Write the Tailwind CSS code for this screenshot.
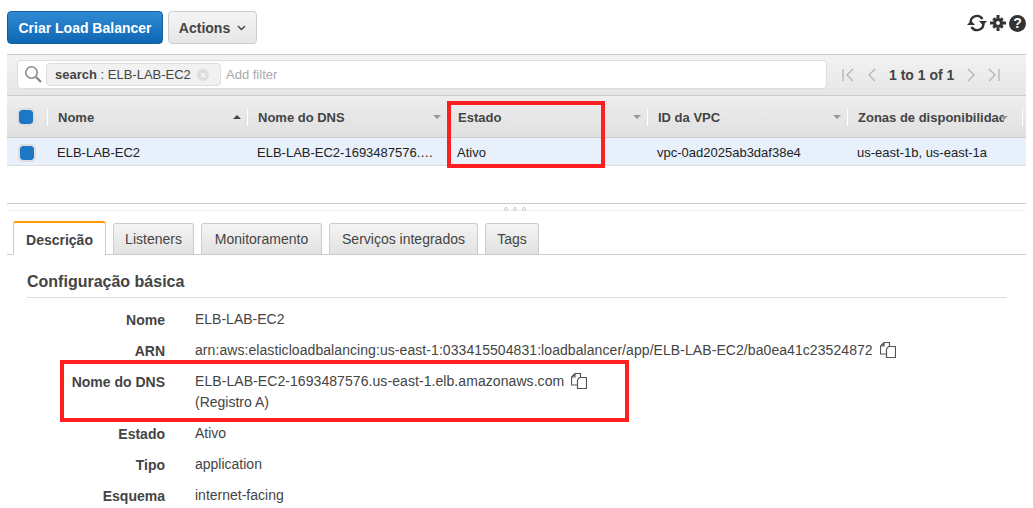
<!DOCTYPE html>
<html lang="en">
<head>
  <meta charset="UTF-8" />
  <title>Load Balancers</title>
  <script src="https://cdn.jsdelivr.net/npm/@tailwindcss/browser@4"></script>
</head>
<body class="bg-white h-[508px] w-[1033px] overflow-hidden relative font-['Liberation_Sans',Arial,sans-serif] text-[13px] text-[#333]">

  <!-- toolbar -->
  <div class="h-[54px] pl-[7px] pr-[7px] pt-[11px] flex items-start gap-[5px]">
    <button class="h-[33px] w-[156px] pt-[1px] rounded-[4px] border border-[#15609f] bg-gradient-to-b from-[#2f8ad4] to-[#0e67b3] text-white font-bold text-[14px]">Criar Load Balancer</button>
    <button class="h-[33px] w-[89px] pt-[1px] rounded-[4px] border border-[#ccc] bg-gradient-to-b from-[#f4f4f4] to-[#e6e6e6] text-[#444] font-bold text-[14px] flex items-center justify-center gap-[7px]">
      Actions
      <svg width="9" height="6" viewBox="0 0 9 6" fill="none" stroke="#444" stroke-width="1.4"><path d="M1 1l3.500 3.500L8 1" /></svg>
    </button>
    <div class="ml-auto mt-[2px] flex items-center">
      <svg width="20" height="20" viewBox="0 0 20 20" fill="none" stroke="#333" stroke-width="2.400">
        <path d="M3.500 9a6.500 6.500 0 0 1 12-3" />
        <path d="M16.500 11a6.500 6.500 0 0 1-12 3" />
        <path d="M12 8h8l-4 4.500z" fill="#333" stroke="none" />
        <path d="M0 12h8L4 7.500z" fill="#333" stroke="none" />
      </svg>
      <svg class="ml-[3px]" width="16" height="16" viewBox="0 0 16 16" fill="#333">
        <circle cx="8" cy="8" r="3.500" fill="none" stroke="#333" stroke-width="3.200" />
        <path d="M6.500 0h3v3h-3zM6.500 13h3v3h-3zM0 6.500h3v3H0zM13 6.500h3v3h-3z" />
        <path d="M2.300 4.400l2.100-2.100 2 2-2.100 2.100zM9.600 11.700l2.100-2.100 2 2-2.100 2.100zM11.700 2.300l2 2.100-2 2-2.100-2.100zM4.300 9.600l2.100 2.100-2.100 2-2-2.100z" />
      </svg>
      <span class="ml-[3px] w-[17px] h-[17px] rounded-full bg-[#333] text-white text-[14px] font-bold leading-[17px] text-center">?</span>
    </div>
  </div>

  <!-- filter bar -->
  <div class="mx-[7px] h-[42px] border-y border-[#ccc] bg-gradient-to-b from-[#f2f2f2] to-[#e6e6e6] flex items-center pl-[10px]">
    <div class="h-[29px] w-[810px] rounded-[4px] border border-[#ddd] bg-white flex items-center pl-[6px] mb-[2px]">
      <svg width="18" height="18" viewBox="0 0 18 18" fill="none" stroke="#8a8a8a">
        <circle cx="7.500" cy="7.500" r="5.700" stroke-width="1.600" />
        <path d="M12 12l5 5" stroke-width="2.400" />
      </svg>
      <span class="ml-[4px] h-[23px] w-[175px] pt-[1px] rounded-[4px] border border-[#ddd] bg-[#f1f1f1] flex items-center pl-[8px] text-[#444]">
        <b>search</b>&nbsp;:&nbsp;ELB-LAB-EC2
        <span class="ml-[6px] w-[12px] h-[12px] rounded-full bg-[#ddd] text-white text-[11px] leading-[12px] text-center">×</span>
      </span>
      <span class="ml-[5px] pt-[1px] text-[#aaa]">Add filter</span>
    </div>
    <div class="ml-[15px] flex items-center text-[#444] font-bold text-[14px]">
      <svg width="13" height="14" viewBox="0 0 13 14" fill="none" stroke="#b5b5b5" stroke-width="1.300"><path d="M1 1v12M11 1L5 7l6 6" /></svg>
      <svg class="ml-[11px]" width="12" height="14" viewBox="0 0 12 14" fill="none" stroke="#b5b5b5" stroke-width="1.300"><path d="M9 1L3 7l6 6" /></svg>
      <span class="ml-[11px]">1 to 1 of 1</span>
      <svg class="ml-[11px]" width="12" height="14" viewBox="0 0 12 14" fill="none" stroke="#b5b5b5" stroke-width="1.300"><path d="M3 1l6 6-6 6" /></svg>
      <svg class="ml-[10px]" width="13" height="14" viewBox="0 0 13 14" fill="none" stroke="#b5b5b5" stroke-width="1.300"><path d="M12 1v12M2 1l6 6-6 6" /></svg>
    </div>
  </div>

  <!-- table -->
  <div class="mx-[7px] h-[42px] border-b border-[#ccc] bg-gradient-to-b from-[#eeeeee] to-[#e0e0e0] grid grid-cols-[40px_200px_200px_200px_200px_176px] items-center font-bold text-[#444]">
    <div class="pl-[12px]"><span class="block w-[14px] h-[14px] rounded-[3px] bg-[#1c78c6] outline-2 outline-[#ddd]"></span></div>
    <div class="h-[18px] mt-[1px] border-l border-[#fff] pl-[10px] pr-[6px] flex items-center justify-between"><span class="pt-[1px]">Nome</span> <span class="w-0 h-0 border-x-[4px] border-x-transparent border-b-[4px] border-b-[#444]"></span></div>
    <div class="h-[18px] mt-[1px] border-l border-[#fff] pl-[10px] pr-[6px] flex items-center justify-between"><span class="pt-[1px]">Nome do DNS</span> <span class="w-0 h-0 border-x-[4px] border-x-transparent border-t-[4px] border-t-[#999]"></span></div>
    <div class="h-[18px] mt-[1px] border-l border-[#fff] pl-[10px] pr-[6px] flex items-center justify-between"><span class="pt-[1px]">Estado</span> <span class="w-0 h-0 border-x-[4px] border-x-transparent border-t-[4px] border-t-[#999]"></span></div>
    <div class="h-[18px] mt-[1px] border-l border-[#fff] pl-[10px] pr-[6px] flex items-center justify-between"><span class="pt-[1px]">ID da VPC</span> <span class="w-0 h-0 border-x-[4px] border-x-transparent border-t-[4px] border-t-[#999]"></span></div>
    <div class="h-[18px] mt-[1px] border-x border-[#fff] pl-[10px] flex items-center relative"><span class="pt-[1px] w-[146px] overflow-hidden whitespace-nowrap">Zonas de disponibilidade</span><span class="absolute right-[14px] top-[8px] w-0 h-0 border-x-[4px] border-x-transparent border-t-[4px] border-t-[#999]"></span></div>
  </div>
  <div class="mx-[7px] h-[28px] pt-[2px] border-b border-[#ddd] bg-[#e8f0fb] grid grid-cols-[40px_200px_200px_200px_200px_180px] items-center text-[#222]">
    <div class="pl-[13px]"><span class="block w-[14px] h-[14px] rounded-[3px] bg-[#1c78c6] outline-2 outline-[#ddd]"></span></div>
    <div class="pl-[10px]">ELB-LAB-EC2</div>
    <div class="pl-[10px]">ELB-LAB-EC2-1693487576.…</div>
    <div class="pl-[10px]">Ativo</div>
    <div class="pl-[10px]">vpc-0ad2025ab3daf38e4</div>
    <div class="pl-[10px]">us-east-1b, us-east-1a</div>
  </div>

  <!-- splitter -->
  <div class="mx-[7px] mt-[37px] h-[7px] border-t border-[#ccc] relative">
    <div class="absolute left-[497px] top-[3px] flex gap-[5px]">
      <span class="w-[4px] h-[4px] rounded-full border border-[#ccc]"></span>
      <span class="w-[4px] h-[4px] rounded-full border border-[#ccc]"></span>
      <span class="w-[4px] h-[4px] rounded-full border border-[#ccc]"></span>
    </div>
  </div>
  <div class="mx-[7px] border-t border-[#eee]"></div>

  <!-- tabs -->
  <div class="mx-[7px] mt-[10px] h-[34px] border-b border-[#ccc] flex items-end pl-[6px] gap-[7px] text-[14px] text-[#444]">
    <div class="h-[34px] w-[93px] -mb-[1px] pt-[2px] border-x border-b-0 border-t-2 border-x-[#ccc] border-t-[#f90] rounded-t-[3px] bg-white flex items-center justify-center font-bold">Descrição</div>
    <div class="h-[31px] w-[81px] pt-[1px] border border-b-0 border-[#ccc] rounded-t-[3px] bg-gradient-to-b from-[#f4f4f4] to-[#e2e2e2] flex items-center justify-center">Listeners</div>
    <div class="h-[31px] w-[121px] pt-[1px] border border-b-0 border-[#ccc] rounded-t-[3px] bg-gradient-to-b from-[#f4f4f4] to-[#e2e2e2] flex items-center justify-center">Monitoramento</div>
    <div class="h-[31px] w-[149px] pt-[1px] border border-b-0 border-[#ccc] rounded-t-[3px] bg-gradient-to-b from-[#f4f4f4] to-[#e2e2e2] flex items-center justify-center">Serviços integrados</div>
    <div class="h-[31px] w-[54px] pt-[1px] border border-b-0 border-[#ccc] rounded-t-[3px] bg-gradient-to-b from-[#f4f4f4] to-[#e2e2e2] flex items-center justify-center">Tags</div>
  </div>

  <!-- description -->
  <div class="ml-[27px] mr-[26px] mt-[17px] pb-[5px] border-b border-[#ddd] font-bold text-[16px] leading-[20px] text-[#444]">Configuração básica</div>
  <div class="mt-[14px] grid grid-cols-[165px_1fr] gap-x-[30px] text-[14px] text-[#444] leading-[15px]">
    <div class="text-right font-bold h-[31px] pt-[1px]">Nome</div><div>ELB-LAB-EC2</div>
    <div class="text-right font-bold h-[31px] pt-[1px]">ARN</div>
    <div class="flex items-start gap-[7px] tracking-[0.07px]">arn:aws:elasticloadbalancing:us-east-1:033415504831:loadbalancer/app/ELB-LAB-EC2/ba0ea41c23524872
      <svg class="-mt-[1px]" width="16" height="16" viewBox="0 0 16 16" fill="none" stroke="#555" stroke-width="1.200"><path d="M9.500 4V.5H4L.5 4v8h6M4 .5V4H.5M8.500 4.500h7v11h-9V7z" /></svg>
    </div>
    <div class="text-right font-bold h-[52px] pt-[1px]">Nome do DNS</div>
    <div class="h-[52px]">
      <div class="flex items-start gap-[7px] h-[21px] tracking-[0.07px]">ELB-LAB-EC2-1693487576.us-east-1.elb.amazonaws.com
        <svg class="-mt-[1px]" width="16" height="16" viewBox="0 0 16 16" fill="none" stroke="#555" stroke-width="1.200"><path d="M9.500 4V.5H4L.5 4v8h6M4 .5V4H.5M8.500 4.500h7v11h-9V7z" /></svg>
      </div>
      <div>(Registro A)</div>
    </div>
    <div class="text-right font-bold h-[31px] pt-[1px]">Estado</div><div>Ativo</div>
    <div class="text-right font-bold h-[31px] pt-[1px]">Tipo</div><div>application</div>
    <div class="text-right font-bold h-[31px] pt-[1px]">Esquema</div><div>internet-facing</div>
  </div>

  <!-- red callouts -->
  <div class="absolute left-[447px] top-[101px] w-[158px] h-[67px] border-4 border-[#fe2020]"></div>
  <div class="absolute left-[60px] top-[360px] w-[569px] h-[62px] border-4 border-[#fe2020]"></div>
</body>
</html>
